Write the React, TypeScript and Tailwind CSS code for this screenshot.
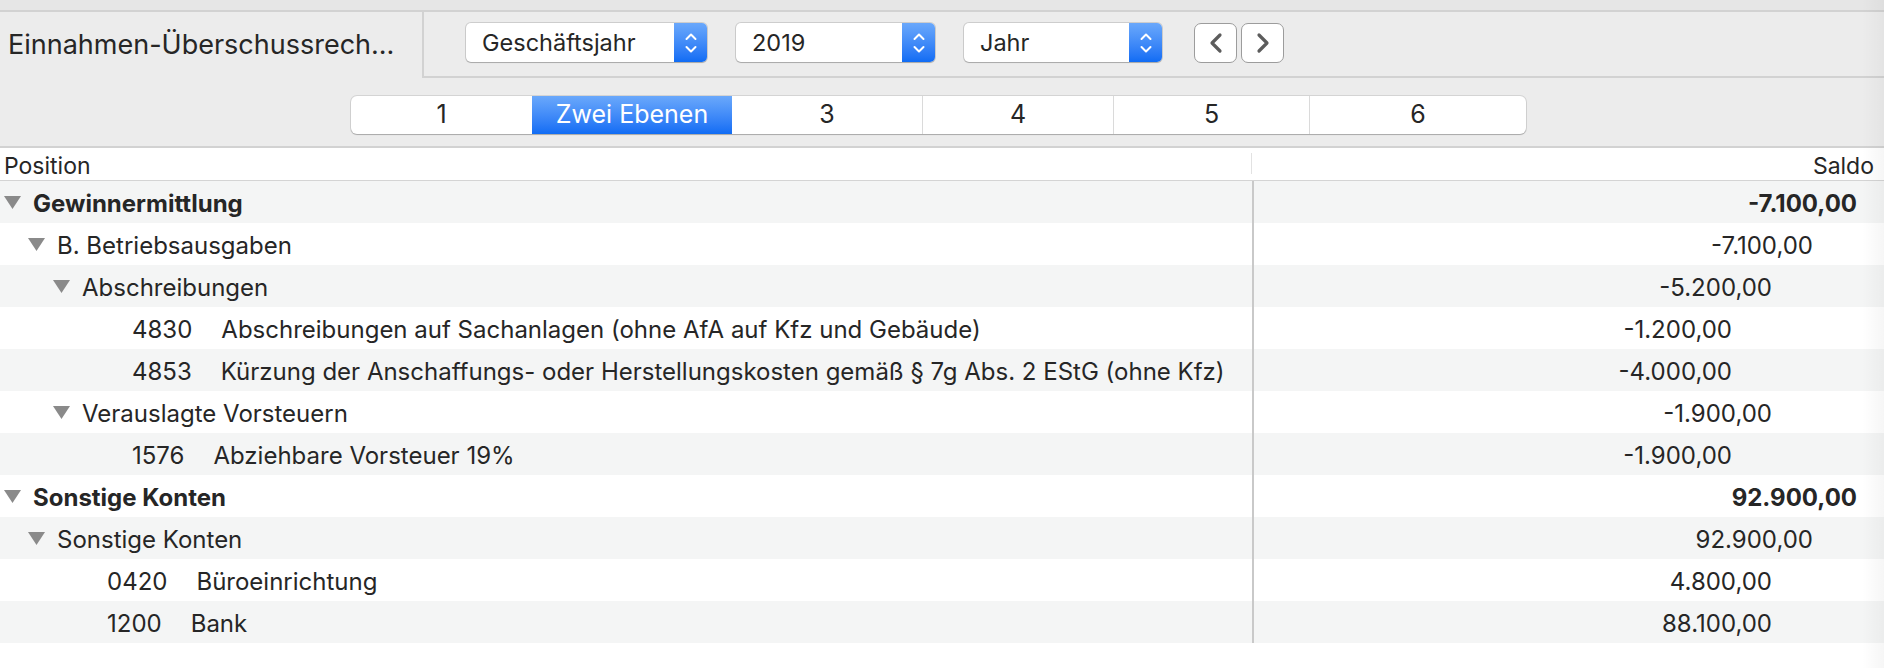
import React from "react";

type Row = {
  level: number;
  kind: "group" | "leaf";
  label: string;
  num?: string;
  value: string;
  bold?: boolean;
};

const rows: Row[] = [
  { level: 0, kind: "group", label: "Gewinnermittlung", value: "-7.100,00", bold: true },
  { level: 1, kind: "group", label: "B. Betriebsausgaben", value: "-7.100,00" },
  { level: 2, kind: "group", label: "Abschreibungen", value: "-5.200,00" },
  { level: 3, kind: "leaf", num: "4830", label: "Abschreibungen auf Sachanlagen (ohne AfA auf Kfz und Gebäude)", value: "-1.200,00" },
  { level: 3, kind: "leaf", num: "4853", label: "Kürzung der Anschaffungs- oder Herstellungskosten gemäß § 7g Abs. 2 EStG (ohne Kfz)", value: "-4.000,00" },
  { level: 2, kind: "group", label: "Verauslagte Vorsteuern", value: "-1.900,00" },
  { level: 3, kind: "leaf", num: "1576", label: "Abziehbare Vorsteuer 19%", value: "-1.900,00" },
  { level: 0, kind: "group", label: "Sonstige Konten", value: "92.900,00", bold: true },
  { level: 1, kind: "group", label: "Sonstige Konten", value: "92.900,00" },
  { level: 2, kind: "leaf", num: "0420", label: "Büroeinrichtung", value: "4.800,00" },
  { level: 2, kind: "leaf", num: "1200", label: "Bank", value: "88.100,00" },
];

const groupPad = ["pl-[4px]", "pl-[28px]", "pl-[53px]", "pl-[77px]"];
const leafPad = ["pl-[58px]", "pl-[83px]", "pl-[107px]", "pl-[132px]"];
const valuePad = ["pr-[27px]", "pr-[71px]", "pr-[112px]", "pr-[152px]"];

function Disclosure() {
  return (
    <svg width="17" height="13" viewBox="0 0 17 13" className="shrink-0 -mt-[3px]">
      <polygon points="0,0 17,0 8.5,13" fill="#8a8a8a" />
    </svg>
  );
}

function UpDown() {
  return (
    <svg width="14" height="24" viewBox="0 0 14 24">
      <polyline points="2.5,8 7,3.5 11.5,8" fill="none" stroke="white" strokeWidth="2" strokeLinecap="round" strokeLinejoin="round" />
      <polyline points="2.5,16 7,20.5 11.5,16" fill="none" stroke="white" strokeWidth="2" strokeLinecap="round" strokeLinejoin="round" />
    </svg>
  );
}

function Popup({ label, width }: { label: string; width: string }) {
  return (
    <div
      className={`${width} h-[39px] flex rounded-[5px] bg-white shadow-[0_0_0_1px_rgba(0,0,0,0.13),0_1px_1px_rgba(0,0,0,0.18)]`}
    >
      <div className="flex-1 flex items-center pl-[16px] text-[23.5px] text-[#262626]">{label}</div>
      <div className="w-[33px] h-full flex items-center justify-center rounded-r-[5px] bg-gradient-to-b from-[#6aa8fb] to-[#0f6cf4]">
        <UpDown />
      </div>
    </div>
  );
}

function NavButton({ dir }: { dir: "left" | "right" }) {
  return (
    <div className="w-[43px] h-[40px] flex items-center justify-center rounded-[7px] bg-white border-[1.5px] border-[#9c9c9c]">
      <svg width="18" height="22" viewBox="0 0 18 22">
        {dir === "left" ? (
          <polyline points="13,3 5,11 13,19" fill="none" stroke="#5c5c5c" strokeWidth="3.2" strokeLinecap="round" strokeLinejoin="round" />
        ) : (
          <polyline points="5,3 13,11 5,19" fill="none" stroke="#5c5c5c" strokeWidth="3.2" strokeLinecap="round" strokeLinejoin="round" />
        )}
      </svg>
    </div>
  );
}

const segments = [
  { label: "1", w: "w-[181px]" },
  { label: "Zwei Ebenen", w: "w-[200px]", selected: true },
  { label: "3", w: "w-[190px]" },
  { label: "4", w: "w-[191px]" },
  { label: "5", w: "w-[196px]" },
  { label: "6", w: "w-[217px]" },
];

export default function App() {
  return (
    <div className="relative w-[1884px] h-[668px] overflow-hidden bg-white text-[#262626] font-['Inter','Liberation_Sans',sans-serif]">
      {/* top strip */}
      <div className="h-[10px] bg-[#e6e6e6]" />
      <div className="bg-[#ececec] border-t-[2px] border-[#d2d2d2]">
        {/* row 1 */}
        <div className="flex h-[66px]">
          <div className="w-[424px] border-r-[2px] border-[#d2d2d2] flex items-center pl-[8px] text-[27px]">
            Einnahmen-Überschussrech...
          </div>
          <div className="flex-1 flex items-center pl-[42px] pb-[3px] border-b-[2px] border-[#d2d2d2]">
            <Popup label="Geschäftsjahr" width="w-[241px]" />
            <div className="w-[29px]" />
            <Popup label="2019" width="w-[199px]" />
            <div className="w-[29px]" />
            <Popup label="Jahr" width="w-[198px]" />
            <div className="w-[32px]" />
            <div className="flex gap-[4px]">
              <NavButton dir="left" />
              <NavButton dir="right" />
            </div>
          </div>
        </div>
        {/* row 2: segmented control */}
        <div className="h-[70px] pl-[351px] pt-[18px] border-b-[2px] border-[#d2d2d2]">
          <div className="flex h-[38px] w-[1175px] rounded-[6px] bg-white shadow-[0_0_0_1px_rgba(0,0,0,0.1),0_1px_1px_rgba(0,0,0,0.2)] overflow-hidden">
            {segments.map((s, i) => (
              <div
                key={i}
                className={`${s.w} h-full flex items-center justify-center text-[25px] ${
                  s.selected
                    ? "bg-gradient-to-b from-[#6aa8fb] to-[#0f6cf4] text-white"
                    : "text-[#262626]"
                } ${i > 0 && !s.selected && !segments[i - 1].selected ? "border-l border-[#dadada]" : ""}`}
              >
                {s.label}
              </div>
            ))}
          </div>
        </div>
      </div>

      {/* table header */}
      <div className="flex h-[33px] border-b-[1.5px] border-[#d4d4d4] bg-white text-[23px]">
        <div className="w-[1252px] flex items-center pl-[4px] pt-[4px] relative">
          Position
          <div className="absolute right-0 top-[5px] h-[21px] w-px bg-[#e2e2e2]" />
        </div>
        <div className="flex-1 flex items-center justify-end pr-[10px] pt-[4px]">Saldo</div>
      </div>

      {/* rows */}
      <div className="text-[24px]">
        {rows.map((r, i) => (
          <div key={i} className={`flex h-[42px] ${i % 2 === 0 ? "bg-[#f4f5f5]" : "bg-white"}`}>
            <div
              className={`w-[1252px] flex items-center pt-[4px] ${
                r.kind === "group" ? groupPad[r.level] : leafPad[r.level]
              } ${r.bold ? "font-bold" : ""}`}
            >
              {r.kind === "group" ? (
                <>
                  <Disclosure />
                  <span className="ml-[12px]">{r.label}</span>
                </>
              ) : (
                <>
                  <span>{r.num}</span>
                  <span className="ml-[29px]">{r.label}</span>
                </>
              )}
            </div>
            <div className="w-[2px] bg-[#c9c9c9]" />
            <div className={`flex-1 flex items-center justify-end pt-[4px] ${valuePad[r.level]} ${r.bold ? "font-bold" : ""}`}>
              {r.value}
            </div>
          </div>
        ))}
      </div>

      {/* right edge scroller shadow */}
      <div className="pointer-events-none absolute right-0 top-0 h-full w-[22px] bg-gradient-to-r from-transparent to-[rgba(0,0,0,0.035)]" />
    </div>
  );
}
